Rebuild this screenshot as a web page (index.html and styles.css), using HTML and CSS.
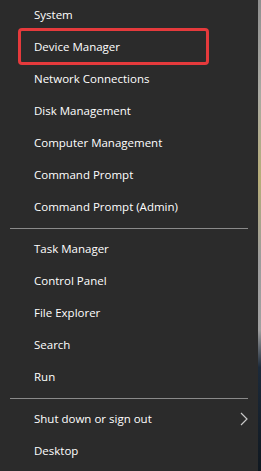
FILE: index.html
```html
<!DOCTYPE html>
<html>
<head>
<meta charset="utf-8">
<link rel="stylesheet" href="styles.css">
</head>
<body>
<div class="screen">
  <nav class="menu">
    <ul class="group first">
      <li class="item">System</li>
      <li class="item highlighted">Device Manager</li>
      <li class="item">Network Connections</li>
      <li class="item">Disk Management</li>
      <li class="item">Computer Management</li>
      <li class="item">Command Prompt</li>
      <li class="item">Command Prompt (Admin)</li>
    </ul>
    <div class="sep"></div>
    <ul class="group">
      <li class="item">Task Manager</li>
      <li class="item">Control Panel</li>
      <li class="item">File Explorer</li>
      <li class="item">Search</li>
      <li class="item">Run</li>
    </ul>
    <div class="sep"></div>
    <ul class="group">
      <li class="item has-sub">Shut down or sign out
        <svg class="chev" width="8" height="14" viewBox="0 0 8 14"><path d="M1 1 L7 7 L1 13" fill="none" stroke="#c8c8c8" stroke-width="1.2"/></svg>
      </li>
      <li class="item">Desktop</li>
    </ul>
  </nav>
  <div class="behind"></div>
</div>
</body>
</html>
```
FILE: styles.css
```css
html, body {
  margin: 0;
  padding: 0;
  background: #2b2b2b;
}
.screen {
  display: flex;
  width: 261px;
  height: 471px;
  overflow: hidden;
}
.menu {
  width: 258px;
  height: 471px;
  background: #2b2b2b;
  font-family: "Open Sans", "Noto Sans", sans-serif;
  font-size: 11.5px;
  color: #ffffff;
}
.group {
  list-style: none;
  margin: 0;
  padding: 0;
}
.group.first {
  margin-top: -1px;
}
.item {
  position: relative;
  height: 32px;
  line-height: 32px;
  padding-left: 34px;
  white-space: nowrap;
}
.highlighted::after {
  content: "";
  position: absolute;
  left: 18px;
  top: -3px;
  width: 185px;
  height: 31px;
  border: 3px solid #e53a3c;
  border-radius: 4px;
}
.sep {
  height: 10px;
  display: flex;
  align-items: flex-start;
  padding: 0 10px;
  box-sizing: border-box;
}
.sep::before {
  content: "";
  display: block;
  margin-top: 5px;
  width: 100%;
  height: 1px;
  background: #8a8a8a;
}
.chev {
  position: absolute;
  left: 240px;
  top: 9px;
}
.behind {
  width: 3px;
  height: 471px;
  background: linear-gradient(to bottom, #8f8f8f 0%, #a9a9a2 20%, #b7ad78 38%, #9c9c9c 55%, #a0a0a0 70%, #1c2a3a 78%, #101820 100%);
}
```
